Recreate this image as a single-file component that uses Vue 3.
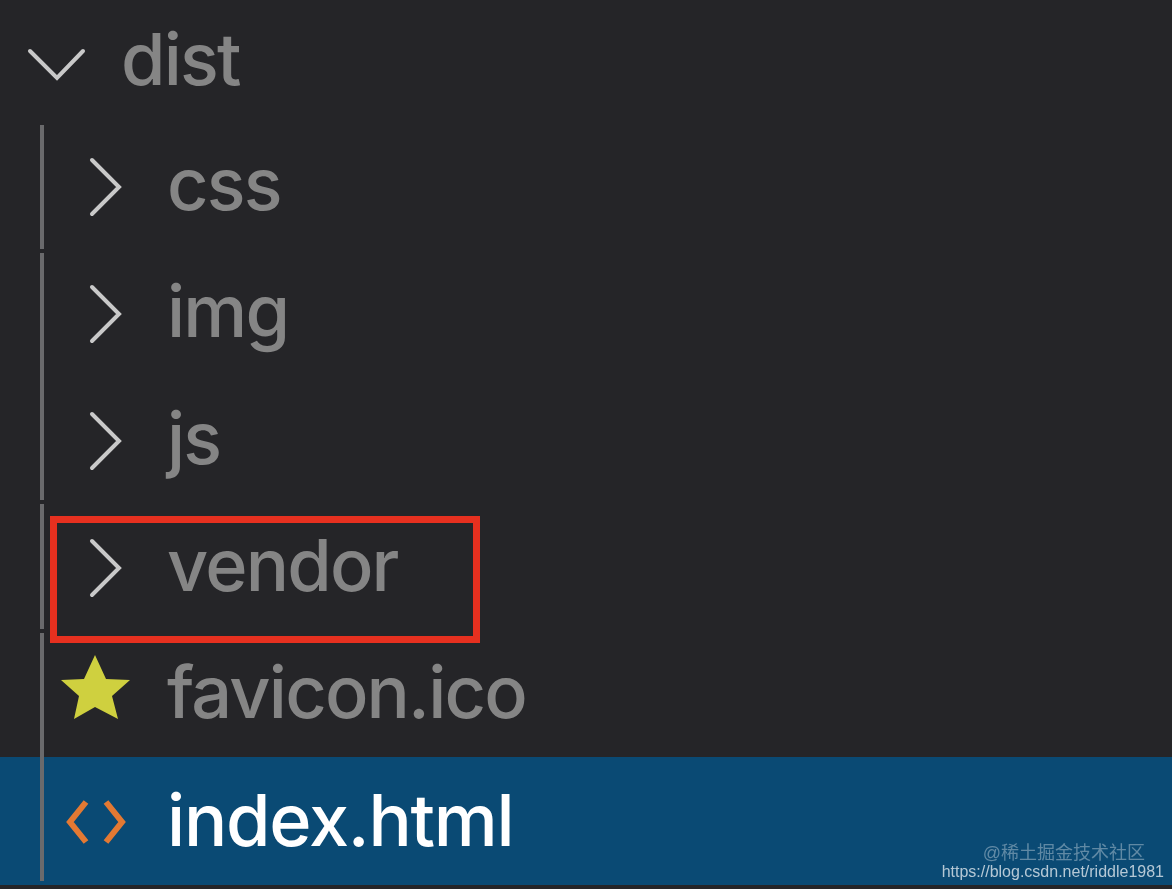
<script setup>
const folders = ['css', 'img', 'js', 'vendor']
</script>

<template>
  <div class="tree">
    <div class="row root">
      <svg class="icon" viewBox="0 0 72 72">
        <path class="chevron" d="M8 26 L35 53 L61 26" />
      </svg>
      <span>dist</span>
    </div>

    <div class="children">
      <div class="guide">
        <i style="height: 124px"></i>
        <i style="height: 247px"></i>
        <i style="height: 125px"></i>
        <i style="height: 248px"></i>
      </div>

      <div v-for="name in folders" :key="name" class="row">
        <svg class="icon" viewBox="0 0 72 72">
          <path class="chevron" d="M32 10 L59 37 L32 64" />
        </svg>
        <span>{{ name }}</span>
      </div>

      <div class="row">
        <svg class="icon" viewBox="0 0 72 72">
          <polygon class="star" points="35,-3 46,21 70,22 52,38 58,61 35,49 14,61 19,38 1,22 24,21" />
        </svg>
        <span>favicon.ico</span>
      </div>

      <div class="row selected">
        <svg class="icon" viewBox="0 0 72 72">
          <path class="code" d="M26 17 L10 37 L26 57 M46 17 L62 37 L46 57" />
        </svg>
        <span>index.html</span>
      </div>

      <div class="highlight"></div>
    </div>

    <div class="watermark">
      <div class="juejin">@稀土掘金技术社区</div>
      <div class="csdn">https://blog.csdn.net/riddle1981</div>
    </div>
  </div>
</template>

<style>
html, body {
  background: #252528;
  overflow: hidden;
}
</style>

<style scoped>
.tree {
  position: relative;
  width: 1172px;
  height: 889px;
  background: #252528;
  font-family: Inter, "Liberation Sans", sans-serif;
  font-size: 72px;
  font-weight: 450;
  letter-spacing: -1.8px;
  color: #858585;
  overflow: hidden;
  filter: blur(0.6px);
}

.row {
  display: flex;
  align-items: center;
  height: 127px;
  padding-left: 60px;
  gap: 35px;
  line-height: 1;
}

.row span {
  position: relative;
  top: -2px;
}

.row.root {
  height: 122px;
  padding-left: 22px;
  gap: 27px;
}

.row.selected {
  height: 128px;
  background: #0a4a74;
  color: #ffffff;
  font-weight: 500;
  letter-spacing: -1.2px;
}

.row.selected span {
  top: -1px;
}

.icon {
  flex: none;
  width: 72px;
  height: 72px;
  overflow: visible;
}

.chevron {
  fill: none;
  stroke: #c9c9c9;
  stroke-width: 4;
  stroke-linecap: round;
}

.star {
  fill: #cfd03f;
}

.code {
  fill: none;
  stroke: #e37933;
  stroke-width: 6;
}

.children {
  position: relative;
}

.guide {
  position: absolute;
  left: 40px;
  top: 3px;
  z-index: 1;
  display: flex;
  flex-direction: column;
  gap: 4px;
}

.guide i {
  display: block;
  width: 4px;
  background: #6a6a6c;
}

.highlight {
  position: absolute;
  left: 50px;
  top: 394px;
  width: 430px;
  height: 127px;
  box-sizing: border-box;
  border: 7px solid #e6301f;
}

.watermark {
  position: absolute;
  right: 8px;
  top: 842px;
  text-align: right;
  color: #c8d6e0;
  font-family: "Liberation Sans", sans-serif;
  font-weight: 400;
  letter-spacing: 0;
}

.juejin {
  padding-right: 19px;
  font-family: "Liberation Sans", "Noto Sans CJK SC", sans-serif;
  font-size: 18px;
  line-height: 22px;
  opacity: 0.45;
}

.csdn {
  font-size: 16px;
  line-height: 15px;
  opacity: 0.9;
}
</style>
